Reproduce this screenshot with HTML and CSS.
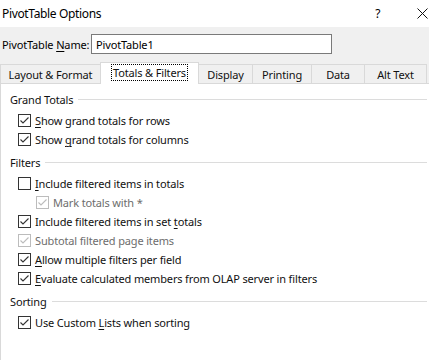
FILE: index.html
```html
<!DOCTYPE html>
<html lang="en">
<head>
    <meta charset="UTF-8">
    <title>PivotTable Options</title>
    <link rel="stylesheet" href="styles.css">
</head>
<body>
    <div class="titlebar">
        <span class="title">PivotTable Options</span>
        <span class="help">?</span>
        <svg class="close" width="11" height="11" viewBox="0 0 11 11">
            <path d="M0.5 0.5 L10.5 10.5 M10.5 0.5 L0.5 10.5" stroke="#111" stroke-width="1" fill="none"/>
        </svg>
    </div>

    <div class="name-row">
        <label for="ptname">PivotTable <u>N</u>ame:</label>
        <input type="text" id="ptname" value="PivotTable1">
    </div>

    <div class="tabs">
        <div class="tab first">Layout &amp; Format</div>
        <div class="tab active"><span class="focus">Totals &amp; Filters</span></div>
        <div class="tab">Display</div>
        <div class="tab">Printing</div>
        <div class="tab">Data</div>
        <div class="tab">Alt Text</div>
    </div>

    <div class="panel">
        <div class="group">
            <div class="group-title"><span>Grand Totals</span></div>
            <div class="row"><span class="box checked"></span><span><u>S</u>how grand totals for rows</span></div>
            <div class="row"><span class="box checked"></span><span>Show <u>g</u>rand totals for columns</span></div>
        </div>

        <div class="group">
            <div class="group-title"><span>Filters</span></div>
            <div class="row"><span class="box"></span><span><u>I</u>nclude filtered items in totals</span></div>
            <div class="row indent disabled"><span class="box checked"></span><span>Mark totals with *</span></div>
            <div class="row"><span class="box checked"></span><span>Include filtered items in set <u>t</u>otals</span></div>
            <div class="row disabled"><span class="box checked"></span><span>Subtotal filtered page items</span></div>
            <div class="row"><span class="box checked"></span><span><u>A</u>llow multiple filters per field</span></div>
            <div class="row"><span class="box checked"></span><span><u>E</u>valuate calculated members from OLAP server in filters</span></div>
        </div>

        <div class="group">
            <div class="group-title"><span>Sorting</span></div>
            <div class="row"><span class="box checked"></span><span>Use Custom <u>L</u>ists when sorting</span></div>
        </div>
    </div>
</body>
</html>
```

FILE: styles.css
```css
body {
    margin: 0;
    background-color: #f0f0f0;
    font-family: 'Segoe UI', 'Noto Sans', sans-serif;
    font-size: 11px;
    letter-spacing: -0.15px;
    color: #000;
    overflow: hidden;
}
u {
    text-decoration-thickness: 1px;
    text-underline-offset: 2px;
}
.titlebar {
    height: 27px;
    background-color: #fff;
    display: flex;
    align-items: center;
    padding-left: 2px;
    font-size: 12px;
    letter-spacing: -0.35px;
}
.title {
    flex: 1;
}
.help {
    margin-right: 37px;
}
.close {
    margin-right: 1px;
}
.name-row {
    display: flex;
    align-items: center;
    height: 20px;
    margin-top: 7px;
    padding-left: 2px;
}
.name-row label {
    width: 89px;
    flex: none;
    white-space: nowrap;
}
.name-row input {
    width: 241px;
    flex: none;
    height: 20px;
    box-sizing: border-box;
    border: 1px solid #7a7a7a;
    padding: 0 0 0 4px;
    font-family: inherit;
    font-size: 11px;
    letter-spacing: -0.15px;
    background: #fff;
    outline: none;
}
.tabs {
    display: flex;
    align-items: flex-end;
    height: 21px;
    margin-top: 8px;
}
.tab {
    height: 19px;
    box-sizing: border-box;
    border: 1px solid #d9d9d9;
    border-bottom: none;
    border-left: none;
    display: flex;
    align-items: center;
    justify-content: center;
    color: #111;
    white-space: nowrap;
}
.tab.first {
    border-left: 1px solid #d9d9d9;
    width: 101px;
}
.tab.active {
    height: 22px;
    width: 99px;
    margin-left: -1px;
    border-left: 1px solid #d9d9d9;
    background-color: #fff;
    margin-bottom: -1px;
    padding-bottom: 2px;
    position: relative;
}
.focus {
    outline: 1px dotted #000;
    outline-offset: 0;
    padding: 0 1px;
}
.tab:nth-child(3) { width: 54px; }
.tab:nth-child(4) { width: 59px; }
.tab:nth-child(5) { width: 53px; }
.tab:nth-child(6) { width: 62px; }
.panel {
    background-color: #fff;
    border: 1px solid #d9d9d9;
    border-right: none;
    height: 275px;
    padding: 5px 2px 0 9px;
}
.group + .group {
    margin-top: 3px;
}
.group-title {
    display: flex;
    align-items: center;
    height: 20px;
    margin-bottom: 2px;
    color: #111;
}
.group-title::after {
    content: "";
    flex: 1;
    border-top: 1px solid #dcdcdc;
    margin-left: 5px;
    margin-top: 1px;
}
.row {
    display: flex;
    align-items: center;
    height: 19px;
    padding-left: 8px;
    color: #111;
}
.row.indent {
    padding-left: 26px;
}
.box {
    width: 13px;
    height: 13px;
    box-sizing: border-box;
    border: 1px solid #333;
    margin-right: 4px;
    flex: none;
    background: #fff center / 11px 11px no-repeat;
}
.box.checked {
    background-image: url("data:image/svg+xml;utf8,<svg xmlns='http://www.w3.org/2000/svg' width='11' height='11' viewBox='0 0 11 11'><path d='M1.5 5.5 L4 8 L9.5 2.5' stroke='%23333' stroke-width='1.1' fill='none'/></svg>");
}
.disabled {
    color: #6d6d6d;
}
.disabled .box {
    border-color: #bcbcbc;
}
.disabled .box.checked {
    background-image: url("data:image/svg+xml;utf8,<svg xmlns='http://www.w3.org/2000/svg' width='11' height='11' viewBox='0 0 11 11'><path d='M1.5 5.5 L4 8 L9.5 2.5' stroke='%23bcbcbc' stroke-width='1.1' fill='none'/></svg>");
}
```
